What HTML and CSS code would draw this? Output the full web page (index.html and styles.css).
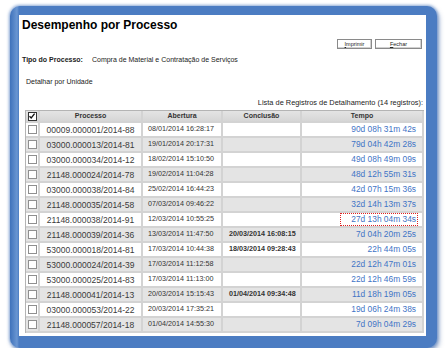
FILE: index.html
```html
<!DOCTYPE html>
<html lang="pt-BR">
<head>
  <meta charset="UTF-8">
  <title>Desempenho por Processo</title>
  <link rel="stylesheet" href="styles.css">
</head>
<body>
  <div class="frame">
    <div class="panel">
      <h1 class="title">Desempenho por Processo</h1>

      <div class="actions">
        <button class="btn"><u>I</u>mprimir</button>
        <button class="btn btn-wide"><u>F</u>echar</button>
      </div>

      <p class="tipo"><b>Tipo do Processo:</b><span>Compra de Material e Contratação de Serviços</span></p>
      <p class="detalhar">Detalhar por Unidade</p>
      <p class="caption">Lista de Registros de Detalhamento (14 registros):</p>

      <table class="grid">
        <colgroup>
          <col class="c-check">
          <col class="c-proc">
          <col class="c-date">
          <col class="c-date2">
          <col class="c-tempo">
        </colgroup>
        <thead>
          <tr>
            <th><span class="box box-on"><svg viewBox="0 0 8 8" width="8" height="8"><path d="M1.5 4.2 L3.2 6 L6.6 1.6" fill="none" stroke="#111" stroke-width="1.3"/></svg></span></th>
            <th>Processo</th>
            <th>Abertura</th>
            <th>Conclusão</th>
            <th>Tempo</th>
          </tr>
        </thead>
        <tbody>
          <tr><td><span class="box"></span></td><td class="proc">00009.000001/2014-88</td><td class="date">08/01/2014 16:28:17</td><td class="date end"></td><td class="tempo"><a>90d 08h 31m 42s</a></td></tr>
          <tr class="odd"><td><span class="box"></span></td><td class="proc">03000.000013/2014-81</td><td class="date">19/01/2014 20:17:31</td><td class="date end"></td><td class="tempo"><a>79d 04h 42m 28s</a></td></tr>
          <tr><td><span class="box"></span></td><td class="proc">03000.000034/2014-12</td><td class="date">18/02/2014 15:10:50</td><td class="date end"></td><td class="tempo"><a>49d 08h 49m 09s</a></td></tr>
          <tr class="odd"><td><span class="box"></span></td><td class="proc">21148.000024/2014-78</td><td class="date">19/02/2014 11:04:28</td><td class="date end"></td><td class="tempo"><a>48d 12h 55m 31s</a></td></tr>
          <tr><td><span class="box"></span></td><td class="proc">03000.000038/2014-84</td><td class="date">25/02/2014 16:44:23</td><td class="date end"></td><td class="tempo"><a>42d 07h 15m 36s</a></td></tr>
          <tr class="odd"><td><span class="box"></span></td><td class="proc">21148.000035/2014-58</td><td class="date">07/03/2014 09:46:22</td><td class="date end"></td><td class="tempo"><a>32d 14h 13m 37s</a></td></tr>
          <tr><td><span class="box"></span></td><td class="proc">21148.000038/2014-91</td><td class="date">12/03/2014 10:55:25</td><td class="date end"></td><td class="tempo"><a class="focus">27d 13h 04m 34s</a></td></tr>
          <tr class="odd"><td><span class="box"></span></td><td class="proc">21148.000039/2014-36</td><td class="date">13/03/2014 11:47:50</td><td class="date end">20/03/2014 16:08:15</td><td class="tempo"><a>7d 04h 20m 25s</a></td></tr>
          <tr><td><span class="box"></span></td><td class="proc">53000.000018/2014-81</td><td class="date">17/03/2014 10:44:38</td><td class="date end">18/03/2014 09:28:43</td><td class="tempo"><a>22h 44m 05s</a></td></tr>
          <tr class="odd"><td><span class="box"></span></td><td class="proc">53000.000024/2014-39</td><td class="date">17/03/2014 11:12:58</td><td class="date end"></td><td class="tempo"><a>22d 12h 47m 01s</a></td></tr>
          <tr><td><span class="box"></span></td><td class="proc">53000.000025/2014-83</td><td class="date">17/03/2014 11:13:00</td><td class="date end"></td><td class="tempo"><a>22d 12h 46m 59s</a></td></tr>
          <tr class="odd"><td><span class="box"></span></td><td class="proc">21148.000041/2014-13</td><td class="date">20/03/2014 15:15:43</td><td class="date end">01/04/2014 09:34:48</td><td class="tempo"><a>11d 18h 19m 05s</a></td></tr>
          <tr><td><span class="box"></span></td><td class="proc">03000.000053/2014-22</td><td class="date">20/03/2014 17:35:21</td><td class="date end"></td><td class="tempo"><a>19d 06h 24m 38s</a></td></tr>
          <tr class="odd"><td><span class="box"></span></td><td class="proc">21148.000057/2014-18</td><td class="date">01/04/2014 14:55:30</td><td class="date end"></td><td class="tempo"><a>7d 09h 04m 29s</a></td></tr>
        </tbody>
      </table>
    </div>
  </div>
</body>
</html>
```

FILE: styles.css
```css
body {
  margin: 0;
  background: #fff;
  font-family: "Liberation Sans", Arial, sans-serif;
  color: #222;
}

/* moldura azul */
.frame {
  width: 407px;
  margin: 6px 0 0 10px;
  padding: 9px 11px 12px 9px;
  background: #4b7cc2;
  background-image: linear-gradient(to right, #3f72bb 0, #6a96d2 7px, #4b7cc2 9px);
  border-radius: 10px;
  box-shadow: 0 0 3px 1px rgba(75, 124, 194, 0.6), 2px 3px 5px rgba(40, 80, 150, 0.5);
}
.panel {
  background: #fff;
  height: 321px;
  padding: 0 3px 0 3px;
  box-sizing: border-box;
  display: flex;
  flex-direction: column;
}

.title {
  margin: 3px 0 0 0;
  font-size: 12px;
  line-height: 14px;
  font-weight: bold;
  color: #000;
}

.actions {
  margin-top: 7px;
  display: flex;
  justify-content: flex-end;
  gap: 3px;
  padding-right: 1px;
}
.btn {
  height: 10px;
  width: 35px;
  padding: 0;
  font-family: inherit;
  font-size: 5.5px;
  line-height: 8px;
  color: #222;
  background: #fff;
  border: 1px solid #8a8a8a;
  box-shadow: inset -1px -1px 0 #d0d0d0;
}
.btn-wide {
  width: 47px;
}

.tipo {
  margin: 6px 0 0 0;
  font-size: 7px;
  line-height: 9px;
}
.tipo span {
  margin-left: 9px;
}
.detalhar {
  margin: 12.5px 0 0 4px;
  font-size: 7px;
  line-height: 9px;
}
.caption {
  margin: 12.5px 0 0 0;
  text-align: right;
  font-size: 7.4px;
  line-height: 9px;
}

.grid {
  margin: 3px 0 0 3px;
  width: 398px;
  table-layout: fixed;
  border-collapse: separate;
  border-spacing: 0;
  border: 1px solid #b4b4b4;
  border-right: 0;
  border-bottom-width: 0;
  font-size: 7px;
  line-height: 10px;
}
.c-check { width: 14px; }
.c-proc { width: 103px; }
.c-date { width: 80px; }
.c-date2 { width: 79px; }
.c-tempo { width: 122px; }

.grid th,
.grid td {
  padding: 0;
  border-right: 2px solid #d3d3d3;
  border-bottom: 2px solid #d3d3d3;
  overflow: hidden;
  white-space: nowrap;
  vertical-align: middle;
}
.grid th {
  height: 10px;
  background: linear-gradient(#e4e4e4, #d6d6d6);
  font-weight: bold;
  color: #333;
  text-align: center;
}
.grid td {
  height: 13px;
  background: #fff;
}
.grid tr.odd td {
  background: #e4e4e4;
}
.grid td:first-child,
.grid th:first-child {
  text-align: center;
  line-height: 8px;
}

.box {
  display: inline-block;
  width: 7px;
  height: 7px;
  border: 1px solid #8f8f8f;
  background: #fff;
  vertical-align: middle;
}
.box-on {
  border-color: #333;
  position: relative;
}
.box-on svg {
  position: absolute;
  left: -0.5px;
  top: -0.5px;
}

.proc {
  text-align: center;
  font-size: 8.5px;
  color: #3a3a3a;
}
.grid td.date {
  vertical-align: top;
  padding-left: 5px;
  padding-top: 1px;
  height: 12px;
  font-size: 7.2px;
  color: #333;
  line-height: 9px;
}
.grid td.end {
  padding-left: 6px;
  font-weight: bold;
}
.grid td.tempo {
  text-align: right;
  padding-right: 5px;
  font-size: 8.4px;
}
.tempo a {
  color: #3f74c6;
  display: inline-block;
  line-height: 11px;
  padding: 0 1px 0 10px;
}
.tempo a.focus {
  outline: 1px dotted #e02020;
  outline-offset: 0;
}
```
